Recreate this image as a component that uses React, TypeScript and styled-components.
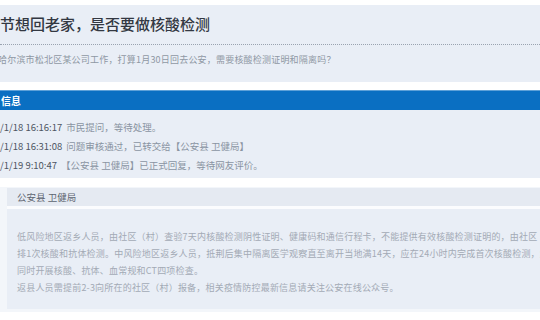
import React from "react";
import styled, { createGlobalStyle } from "styled-components";

const GlobalStyle = createGlobalStyle`
  html, body {
    margin: 0;
    padding: 0;
    background: #ffffff;
  }
  body {
    font-family: "Noto Sans CJK SC", "Noto Sans", sans-serif;
    width: 540px;
    height: 320px;
    overflow: hidden;
  }
`;

const progress = [
  { time: "/1/18 16:16:17", text: "市民提问，等待处理。" },
  { time: "/1/18 16:31:08", text: "问题审核通过，已转交给【公安县 卫健局】" },
  { time: "/1/19 9:10:47", text: "【公安县 卫健局】已正式回复，等待网友评价。" },
];

const replyLines = [
  "低风险地区返乡人员，由社区（村）查验7天内核酸检测阴性证明、健康码和通信行程卡，不能提供有效核酸检测证明的，由社区（村）安",
  "排1次核酸和抗体检测。中风险地区返乡人员，抵荆后集中隔离医学观察直至离开当地满14天，应在24小时内完成首次核酸检测，解除隔离",
  "同时开展核酸、抗体、血常规和CT四项检查。",
  "返县人员需提前2-3向所在的社区（村）报备，相关疫情防控最新信息请关注公安在线公众号。",
];

export default function App() {
  return (
    <>
      <GlobalStyle />
      <Page>
        <Question>
          <Title>节想回老家，是否要做核酸检测</Title>
          <Detail>哈尔滨市松北区某公司工作，打算1月30日回去公安，需要核酸检测证明和隔离吗？</Detail>
        </Question>

        <SectionBar>信息</SectionBar>
        <Progress>
          {progress.map((p) => (
            <ProgressRow key={p.time}>
              <Time>{p.time}</Time>
              <span>{p.text}</span>
            </ProgressRow>
          ))}
        </Progress>

        <Reply>
          <ReplyBox>
            <ReplyHead>公安县 卫健局</ReplyHead>
            <ReplyBody>
              {replyLines.map((l, i) => (
                <ReplyLine key={i}>{l}</ReplyLine>
              ))}
            </ReplyBody>
          </ReplyBox>
        </Reply>
      </Page>
    </>
  );
}

const Page = styled.div`
  padding-top: 5px;
  width: 540px;
  overflow: hidden;
`;

const Question = styled.section`
  background: #e9eef6;
  padding: 9px 0 15px;
`;

const Title = styled.h1`
  margin: 0;
  font-size: 15px;
  line-height: 20px;
  font-weight: 500;
  color: #333842;
  padding-bottom: 10px;
  border-bottom: 1px dotted #9aa3b0;
  white-space: nowrap;
`;

const Detail = styled.p`
  margin: 8px 0 0 -2px;
  font-size: 9px;
  line-height: 14px;
  letter-spacing: 0.2px;
  color: #8f98a4;
  white-space: nowrap;
`;

const SectionBar = styled.div`
  margin-top: 8px;
  height: 19px;
  border-top: 1px solid #5ea1d8;
  background: #0a6fc2;
  color: #ffffff;
  font-size: 10px;
  font-weight: 700;
  line-height: 19px;
  padding-left: 1px;
`;

const Progress = styled.div`
  background: #e9eef6;
  padding: 8px 0 3px;
`;

const ProgressRow = styled.div`
  height: 19px;
  line-height: 19px;
  font-size: 9.5px;
  color: #8a94a2;
  white-space: nowrap;
`;

const Time = styled.span`
  color: #4d5562;
  margin-right: 4px;
`;

const Reply = styled.section`
  margin-top: 9px;
  background: #f3f6fa;
  padding: 1px 0 3px 7px;
`;

const ReplyBox = styled.div`
  display: flex;
  flex-direction: column;
  gap: 3px;
  background: #fbfcfe;
`;

const ReplyHead = styled.div`
  background: #e5eaf2;
  height: 18px;
  line-height: 18px;
  padding-left: 10px;
  font-size: 9.5px;
  color: #5c6470;
`;

const ReplyBody = styled.div`
  background: #e9eef6;
  padding: 19px 0 13px 10px;
`;

const ReplyLine = styled.div`
  height: 17px;
  line-height: 17px;
  font-size: 9px;
  letter-spacing: 0.2px;
  color: #a3aab5;
  white-space: nowrap;
`;
